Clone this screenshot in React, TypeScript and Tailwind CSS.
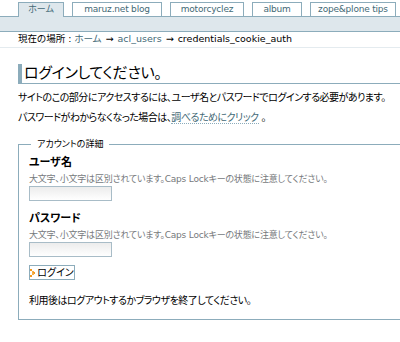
import React from 'react';

const tabs = [
  { label: 'ホーム', w: 'w-[46px]' },
  { label: 'maruz.net blog', w: 'w-[90px]' },
  { label: 'motorcyclez', w: 'w-[74px]' },
  { label: 'album', w: 'w-[50px]' },
  { label: 'zope&plone tips', w: 'w-[86px]' },
];

function ArrowIcon() {
  // small orange dotted chevron used by plone buttons
  return (
    <svg width="5" height="8" viewBox="0 0 5 8" className="mr-[2px]">
      <rect x="0" y="0" width="2" height="2" fill="#f39a1e" />
      <rect x="2" y="2" width="2" height="2" fill="#f7b04a" />
      <rect x="3" y="3" width="2" height="2" fill="#f39a1e" />
      <rect x="2" y="4" width="2" height="2" fill="#f7b04a" />
      <rect x="0" y="6" width="2" height="2" fill="#f39a1e" />
    </svg>
  );
}

function Field({ label }: { label: string }) {
  return (
    <div>
      <div className="text-[11px] font-bold leading-[14px] text-black">{label}</div>
      <div className="mt-[3px] text-[9px] leading-[12px] tracking-[-0.2px] text-[#76797c] whitespace-nowrap">
        大文字、小文字は区別されています。Caps Lockキーの状態に注意してください。
      </div>
      <input
        type="text"
        className="mt-[1px] block w-[83px] h-[15px] border border-[#a8bcc7] bg-gradient-to-b from-[#ececec] to-white outline-none"
      />
    </div>
  );
}

export default function App() {
  return (
    <div className="w-[400px] h-[342px] overflow-hidden bg-white text-black font-['DejaVu_Sans','Noto_Sans_CJK_JP',sans-serif] [font-feature-settings:'palt']">
      {/* Tabs */}
      <div className="h-[17px] flex items-end gap-[8px] pl-[18px] border-b border-[#8cacbb] whitespace-nowrap">
        {tabs.map((t, i) => (
          <div
            key={t.label}
            className={
              i === 0
                ? 'shrink-0 h-[15px] -mb-px flex items-center justify-center border border-b-0 border-[#8cacbb] bg-[#dee7ec] text-[9px] text-[#436976] ' + t.w
                : 'shrink-0 h-[14px] flex items-center justify-center border border-b-0 border-[#8cacbb] bg-white text-[9px] tracking-[-0.2px] text-[#436976] ' + t.w
            }
          >
            {t.label}
          </div>
        ))}
      </div>
      <div className="h-[15px] bg-[#dee7ec] border-b border-[#8cacbb]" />

      {/* Breadcrumb */}
      <div className="h-[16px] flex items-center pl-[18px] border-b border-[#e4ebef] text-[9.5px] whitespace-nowrap">
        <span>現在の場所 : </span>
        <span className="ml-[3px] text-[#436976]">ホーム</span>
        <span className="mx-[4px]">→</span>
        <span className="text-[#436976]">acl_users</span>
        <span className="mx-[4px]">→</span>
        <span>credentials_cookie_auth</span>
      </div>

      {/* Content */}
      <div className="pl-[18px]">
        <h1 className="mt-[16px] h-[20px] flex items-center border-l-[4px] border-b border-[#8cacbb] pl-[2px] text-[15px] tracking-[-0.3px] leading-none font-normal">
          ログインしてください。
        </h1>
        <p className="mt-[8px] text-[10px] leading-[12px] tracking-[-0.5px] whitespace-nowrap">
          サイトのこの部分にアクセスするには、ユーザ名とパスワードでログインする必要があります。
        </p>
        <p className="mt-[8px] text-[10px] leading-[12px] tracking-[-0.5px] whitespace-nowrap">
          パスワードがわからなくなった場合は、
          <span className="text-[#436976] border-b border-dotted border-[#8cacbb]">調べるためにクリック</span> 。
        </p>

        <fieldset className="mt-[15px] w-[420px] border border-[#8cacbb] pl-[10px] pb-[12px]">
          <legend className="ml-[2px] px-[6px] text-[9px] leading-[10px]">アカウントの詳細</legend>
          <div className="mt-[7px]">
            <Field label="ユーザ名" />
          </div>
          <div className="mt-[11px]">
            <Field label="パスワード" />
          </div>
          <button className="mt-[8px] h-[15px] w-[46px] flex items-center justify-center border border-[#8cacbb] bg-white text-[10px] leading-none">
            <ArrowIcon />
            ログイン
          </button>
          <p className="mt-[15px] text-[10px] leading-[12px] tracking-[-0.5px] whitespace-nowrap">
            利用後はログアウトするかブラウザを終了してください。
          </p>
        </fieldset>
      </div>
    </div>
  );
}
